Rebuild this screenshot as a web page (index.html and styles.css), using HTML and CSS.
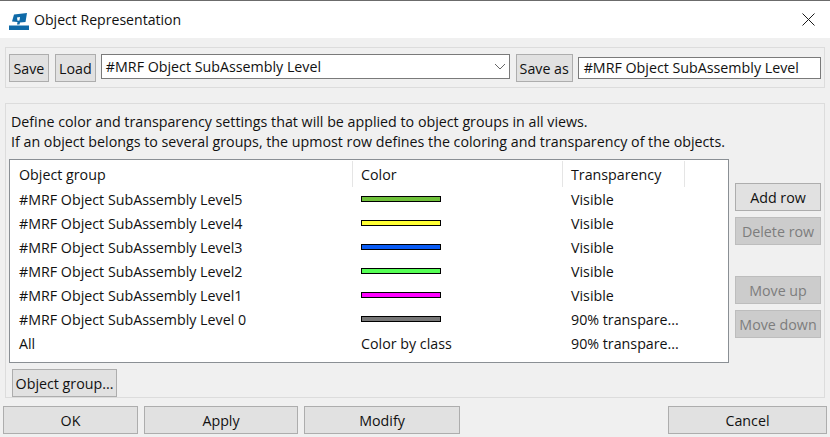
FILE: index.html
```html
<!DOCTYPE html>
<html lang="en">
<head>
<meta charset="utf-8">
<title>Object Representation</title>
<link rel="stylesheet" href="styles.css">
</head>
<body>
<div class="dialog">
  <header class="titlebar">
    <svg class="app-icon" width="20" height="20" viewBox="0 0 20 20"><path fill="#0f6aa8" d="M0 15.500h20V20H0z"/><path fill="#0f6aa8" d="M5 4.500l13-1.500-1.500 9-5.500.5-.5 2H8l.5-2.500-5.500-.5z"/><path fill="#fff" d="M8 7.500l3-.5-.5 3.500-2 .2z"/></svg>
    <span class="title">Object Representation</span>
    <svg class="close" width="13" height="13" viewBox="0 0 13 13"><path d="M.5.5l12 12M12.500.5l-12 12" stroke="#1a1a1a" stroke-width="1" fill="none"/></svg>
  </header>
  <section class="group toolbar">
    <button class="btn b-save">Save</button>
    <button class="btn b-load">Load</button>
    <div class="combo"><span>#MRF Object SubAssembly Level</span>
      <svg width="12" height="7" viewBox="0 0 12 7"><path d="M1 1l5 5 5-5" fill="none" stroke="#666" stroke-width="1"/></svg>
    </div>
    <button class="btn b-saveas">Save as</button>
    <div class="textfield">#MRF Object SubAssembly Level</div>
  </section>
  <section class="group main">
    <p class="desc">Define color and transparency settings that will be applied to object groups in all views.<br>If an object belongs to several groups, the upmost row defines the coloring and transparency of the objects.</p>
    <div class="content">
      <div class="table">
        <div class="row head"><span class="c1">Object group</span><span class="c2">Color</span><span class="c3">Transparency</span></div>
        <div class="row"><span class="c1">#MRF Object SubAssembly Level5</span><span class="c2"><i class="sw s5"></i></span><span class="c3">Visible</span></div>
        <div class="row"><span class="c1">#MRF Object SubAssembly Level4</span><span class="c2"><i class="sw s4"></i></span><span class="c3">Visible</span></div>
        <div class="row"><span class="c1">#MRF Object SubAssembly Level3</span><span class="c2"><i class="sw s3"></i></span><span class="c3">Visible</span></div>
        <div class="row"><span class="c1">#MRF Object SubAssembly Level2</span><span class="c2"><i class="sw s2"></i></span><span class="c3">Visible</span></div>
        <div class="row"><span class="c1">#MRF Object SubAssembly Level1</span><span class="c2"><i class="sw s1"></i></span><span class="c3">Visible</span></div>
        <div class="row"><span class="c1">#MRF Object SubAssembly Level 0</span><span class="c2"><i class="sw s0"></i></span><span class="c3">90% transpare...</span></div>
        <div class="row"><span class="c1">All</span><span class="c2">Color by class</span><span class="c3">90% transpare...</span></div>
      </div>
      <div class="side">
        <button class="btn side-btn">Add row</button>
        <button class="btn side-btn off">Delete row</button>
        <button class="btn side-btn off gap">Move up</button>
        <button class="btn side-btn off">Move down</button>
      </div>
    </div>
    <button class="btn b-group">Object group...</button>
  </section>
  <footer class="actions">
    <button class="btn a-ok">OK</button>
    <button class="btn a-apply">Apply</button>
    <button class="btn a-modify">Modify</button>
    <button class="btn a-cancel">Cancel</button>
  </footer>
</div>
</body>
</html>
```
FILE: styles.css
```css
* { box-sizing: border-box; }
html, body { margin: 0; padding: 0; }
body { width: 830px; height: 437px; overflow: hidden; background: #f0f0f0; font-family: "Open Sans", "Noto Sans", sans-serif; font-size: 14.25px; color: #111; }
.dialog { height: 437px; display: flex; flex-direction: column; border-top: 1px solid #6b6b6b; }
.titlebar { height: 37px; flex: none; background: #fff; display: flex; align-items: center; padding: 0 15px 0 9px; }
.app-icon { flex: none; }
.title { margin-left: 5px; flex: 1; font-size: 14.1px; }
.group { border: 1px solid #dcdcdc; margin-left: 5px; margin-right: 5px; }
.toolbar { margin-top: 9px; height: 41px; display: flex; align-items: flex-start; padding: 6px 3px 0 3px; }
.btn { font: inherit; color: #111; background: #e1e1e1; border: 1px solid #adadad; padding: 0; height: 28px; display: block; white-space: nowrap; }
.b-save { width: 40px; }
.b-load { width: 41px; margin-left: 6px; }
.combo { width: 410px; height: 25px; margin-left: 5px; background: #fff; border: 1px solid #7a7a7a; display: flex; justify-content: space-between; align-items: center; padding: 0 3px 0 4px; }
.b-saveas { width: 57px; margin-left: 6px; }
.textfield { width: 244px; height: 22px; margin: 3px 0 0 5px; background: #fff; border: 1px solid #7a7a7a; padding-left: 5px; line-height: 20px; }
.main { margin-top: 15px; height: 295px; padding: 7px 3px 0 3px; }
.desc { margin: 0 0 0 2px; line-height: 20px; height: 48px; padding-top: 1px; }
.content { display: flex; align-items: flex-start; }
.table { width: 720px; height: 204px; background: #fff; border: 1px solid #8a8f94; padding-top: 1px; }
.row { display: grid; grid-template-columns: 343px 210px 122px; height: 24px; align-items: center; }
.row.head { height: 26px; }
.row > span { padding-left: 8px; height: 100%; display: flex; align-items: center; white-space: nowrap; }
.row.head > span { border-right: 1px solid #e5e5e5; }
.row > .c1 { padding-left: 9px; }
.sw { display: block; width: 80px; height: 6px; border: 1px solid #000; margin-top: -1px; }
.s5 { background: #6fc13a; }
.s4 { background: #ffff33; }
.s3 { background: #0a5cf5; }
.s2 { background: #55ff55; }
.s1 { background: #ff00ff; }
.s0 { background: #777777; }
.side { margin-left: 6px; padding-top: 24px; display: flex; flex-direction: column; gap: 6px; }
.side-btn { width: 86px; }
.off { background: #cccccc; color: #7d7d7d; border-color: #bdbdbd; }
.gap { margin-top: 25px; }
.b-group { margin: 6px 0 0 3px; width: 105px; }
.actions { margin-top: 8px; display: flex; padding: 0 3px; }
.a-ok { width: 135px; }
.a-apply { width: 154px; margin-left: 6px; }
.a-modify { width: 156px; margin-left: 6px; }
.a-cancel { width: 159px; margin-left: auto; }
```
